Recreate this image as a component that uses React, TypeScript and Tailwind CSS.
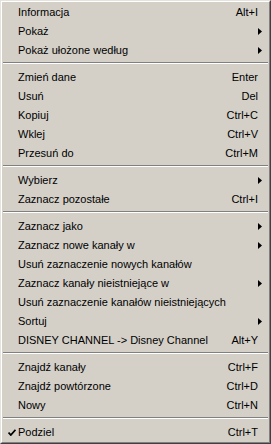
type Item =
  | { kind: "sep" }
  | { kind: "item"; label: string; shortcut?: string; sub?: boolean; checked?: boolean };

const items: Item[] = [
  { kind: "item", label: "Informacja", shortcut: "Alt+I" },
  { kind: "item", label: "Pokaż", sub: true },
  { kind: "item", label: "Pokaż ułożone według", sub: true },
  { kind: "sep" },
  { kind: "item", label: "Zmień dane", shortcut: "Enter" },
  { kind: "item", label: "Usuń", shortcut: "Del" },
  { kind: "item", label: "Kopiuj", shortcut: "Ctrl+C" },
  { kind: "item", label: "Wklej", shortcut: "Ctrl+V" },
  { kind: "item", label: "Przesuń do", shortcut: "Ctrl+M" },
  { kind: "sep" },
  { kind: "item", label: "Wybierz", sub: true },
  { kind: "item", label: "Zaznacz pozostałe", shortcut: "Ctrl+I" },
  { kind: "sep" },
  { kind: "item", label: "Zaznacz jako", sub: true },
  { kind: "item", label: "Zaznacz nowe kanały w", sub: true },
  { kind: "item", label: "Usuń zaznaczenie nowych kanałów" },
  { kind: "item", label: "Zaznacz kanały nieistniejące w", sub: true },
  { kind: "item", label: "Usuń zaznaczenie kanałów nieistniejących" },
  { kind: "item", label: "Sortuj", sub: true },
  { kind: "item", label: "DISNEY CHANNEL -> Disney Channel", shortcut: "Alt+Y" },
  { kind: "sep" },
  { kind: "item", label: "Znajdź kanały", shortcut: "Ctrl+F" },
  { kind: "item", label: "Znajdź powtórzone", shortcut: "Ctrl+D" },
  { kind: "item", label: "Nowy", shortcut: "Ctrl+N" },
  { kind: "sep" },
  { kind: "item", label: "Podziel", shortcut: "Ctrl+T", checked: true },
];

function Arrow() {
  return (
    <svg width="4" height="7" viewBox="0 0 4 7" className="-mr-[4px]">
      <polygon points="0,0 4,3.5 0,7" fill="#000" />
    </svg>
  );
}

function Check() {
  return (
    <svg width="8" height="7" viewBox="0 0 8 7" className="absolute left-[5px] top-[6px]">
      <path d="M0.5 3.5 L2.8 6 L7.5 0.8" stroke="#000" strokeWidth="1.8" fill="none" />
    </svg>
  );
}

export default function App() {
  return (
    <div className="w-[271px] h-[444px] bg-[#d4d0c8] border-t border-l border-t-[#e6e3dd] border-l-[#e6e3dd] border-r border-b border-r-[#404040] border-b-[#404040] font-['Liberation_Sans',Arial,sans-serif] text-[11px] text-black">
      <div className="h-full border-t border-l border-t-white border-l-white border-r border-b border-r-[#808080] border-b-[#808080] px-[1px] pt-[1px]">
        {items.map((it, i) =>
          it.kind === "sep" ? (
            <div key={i} className="h-[8px] pt-[2px]">
              <div className="border-t border-t-[#808080] border-b border-b-white" />
            </div>
          ) : (
            <div key={i} className="relative flex h-[19px] items-center pl-[15px] pr-[10px]">
              {it.checked && <Check />}
              <span className="whitespace-nowrap">{it.label}</span>
              <span className="ml-auto flex items-center">
                {it.shortcut && <span>{it.shortcut}</span>}
                {it.sub && <Arrow />}
              </span>
            </div>
          )
        )}
      </div>
    </div>
  );
}
